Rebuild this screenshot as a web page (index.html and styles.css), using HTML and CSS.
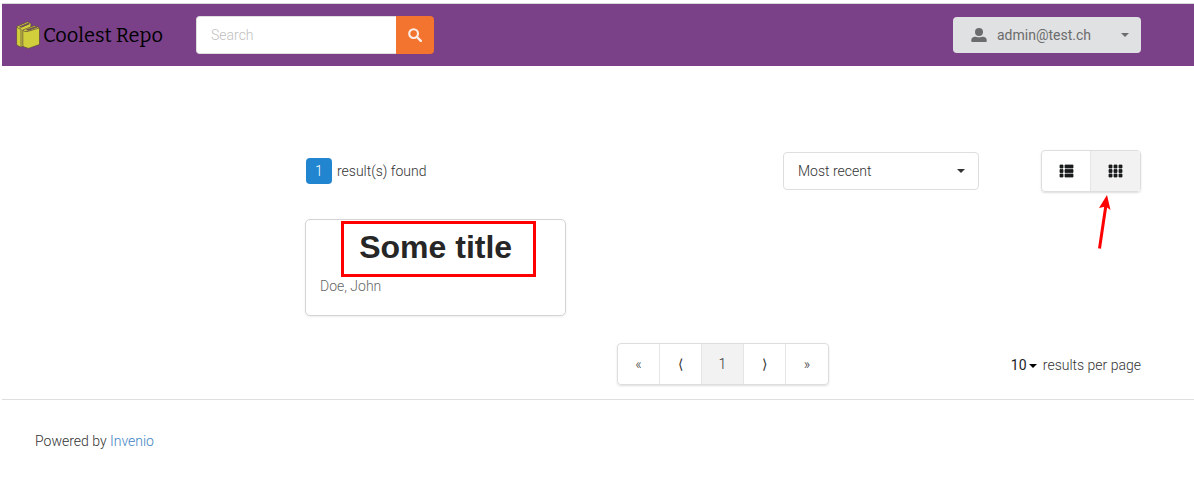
FILE: index.html
```html
<!DOCTYPE html>
<html lang="en">
<head>
<meta charset="utf-8">
<title>Coolest Repo</title>
<link rel="stylesheet" href="styles.css">
</head>
<body>
<header class="topbar">
  <a class="brand" href="#">
    <svg class="brand-icon" viewBox="0 0 24 28" aria-hidden="true">
      <g stroke="#5a4540" stroke-width=".7" stroke-linejoin="round">
        <path d="M.6 5.500 11.500.8 15 2.500 14 24 4.500 26 1.500 24.500Q.6 24 .6 22.500z" fill="#d2cf3c"/>
        <path d="M3.500 5.800 12 2.300l1.300.6L5.500 6.300z" fill="#81508b"/>
        <path d="M.8 6q1 1.500 4.200 2V25.500" fill="none"/>
        <path d="M6.800 9 18.500 4.500 23.500 6.800V23.500L12.500 27.400 8 26Q6.800 25.400 6.800 24z" fill="#d2cf3c"/>
        <path d="M10.500 8.800 19.500 5.700l1.300.5L12.500 9.300z" fill="#81508b"/>
        <path d="M7 9.400q1.200 1.400 4 1.200L23.200 7" fill="none"/>
      </g>
    </svg>
    <span>Coolest Repo</span>
  </a>
  <form class="search">
    <input class="search-input" type="search" placeholder="Search" aria-label="Search">
    <button class="search-button" type="button" aria-label="Submit search">
      <svg width="14" height="14" viewBox="0 0 14 14" aria-hidden="true"><circle cx="5.600" cy="5.600" r="4.400" fill="none" stroke="#fbeee8" stroke-width="2.100"/><path d="m9 9 3.800 3.800" stroke="#fbeee8" stroke-width="2.400" stroke-linecap="round"/></svg>
    </button>
  </form>
  <button class="account" type="button">
    <svg width="16" height="14" viewBox="0 0 16 14" fill="currentColor" aria-hidden="true"><circle cx="8" cy="4" r="4"/><path d="M1 14q-.700 0-.700-.800v-1.200Q.500 9.300 3.500 8.700h1.300q3.200 1.300 6.400 0h1.300q3 .600 3.200 3.300v1.200q0 .8-.7.800z"/></svg>
    <span>admin@test.ch</span>
    <svg class="account-caret" width="8" height="4" viewBox="0 0 8 4" fill="currentColor" aria-hidden="true"><path d="M0 0h8L4 4z"/></svg>
  </button>
</header>

<main class="layout">
  <section class="results">
    <div class="toolbar">
      <p class="count"><span class="count-label">1</span> result(s) found</p>
      <div class="picker">
        <select class="sort" aria-label="Sort by"><option>Most recent</option></select>
        <svg class="picker-caret" width="8" height="4" viewBox="0 0 8 4" aria-hidden="true"><path d="M0 0h8L4 4z" fill="#333"/></svg>
      </div>
      <div class="group views">
        <button class="cell" type="button" aria-label="List view">
          <svg width="15" height="14" viewBox="0 0 15 14" aria-hidden="true"><path d="M1 1h3v3H1zM6 1h8v3H6zM1 5.500h3v3H1zM6 5.500h8v3H6zM1 10h3v3H1zM6 10h8v3H6z" fill="#1b1c1d" stroke="#1b1c1d" stroke-width=".8" stroke-linejoin="round"/></svg>
        </button>
        <button class="cell active" type="button" aria-label="Grid view" aria-pressed="true">
          <svg width="15" height="14" viewBox="0 0 15 14" aria-hidden="true"><path d="M1 1h3v3H1zM6 1h3v3H6zM11 1h3v3h-3zM1 5.500h3v3H1zM6 5.500h3v3H6zM11 5.500h3v3h-3zM1 10h3v3H1zM6 10h3v3H6zM11 10h3v3h-3z" fill="#1b1c1d" stroke="#1b1c1d" stroke-width=".8" stroke-linejoin="round"/></svg>
        </button>
        <svg class="pointer" width="14" height="56" viewBox="0 0 14 56" aria-hidden="true"><path d="M2.500 54.500 8.800 12" stroke="red" stroke-width="3"/><path d="M10 1 13.500 16 8.800 12.500 2 14z" fill="red"/></svg>
      </div>
    </div>

    <div class="cards">
      <article class="card">
        <h1 class="card-title">Some title</h1>
        <p class="card-meta">Doe, John</p>
      </article>
    </div>

    <div class="paging">
      <nav class="group pages" aria-label="Pages">
        <button class="cell" type="button" aria-label="First page">«</button>
        <button class="cell" type="button" aria-label="Previous page">⟨</button>
        <button class="cell active" type="button" aria-current="page">1</button>
        <button class="cell" type="button" aria-label="Next page">⟩</button>
        <button class="cell" type="button" aria-label="Last page">»</button>
      </nav>
      <label class="per-page">
        <select class="size"><option>10</option></select>
        <svg class="size-caret" width="8" height="4" viewBox="0 0 8 4" aria-hidden="true"><path d="M0 0h8L4 4z"/></svg>
        <span>results per page</span>
      </label>
    </div>
  </section>
</main>

<footer class="footer">Powered by <a href="#">Invenio</a></footer>
</body>
</html>
```
FILE: styles.css
```css
*,
*::after {
  box-sizing: border-box;
}

body {
  margin: 3px 0 0 2px;
  background: #fff;
  color: #333;
  font: 300 14px/20px Roboto, "Liberation Sans", sans-serif;
}

p,
h1 {
  margin: 0;
}

button,
input,
select {
  margin: 0;
  padding: 0;
  border: 0;
  font: inherit;
  color: inherit;
  background: none;
  appearance: none;
}

svg {
  display: block;
  flex: none;
}

.topbar {
  display: flex;
  align-items: center;
  padding: 12px 53px 12px 14px;
  border-top: 1px solid #d8d9da;
  background: #7a4189;
}

.brand {
  display: flex;
  align-items: center;
  gap: 3px;
  width: 180px;
  color: #000;
  font: 400 20px/24px Bitter, "DejaVu Serif", serif;
  text-decoration: none;
  white-space: nowrap;
}

.brand-icon {
  width: 24px;
  height: 28px;
}

.search {
  display: flex;
}

.search-input {
  width: 200px;
  height: 38px;
  padding: 0 14px;
  border: 1px solid #dededf;
  border-right: 0;
  border-radius: 4px 0 0 4px;
  background: #fff;
}

.search-input::placeholder {
  color: #bfbfbf;
}

.search-button {
  display: grid;
  place-items: center;
  width: 38px;
  border-radius: 0 4px 4px 0;
  background: #f2742f;
}

.account {
  display: flex;
  align-items: center;
  gap: 10px;
  width: 188px;
  height: 36px;
  margin-left: auto;
  padding: 0 12px 0 18px;
  border-radius: 4px;
  background: #e0e1e2;
  color: #6b6c6d;
  font-weight: 400;
}

.account-caret {
  margin-left: auto;
}

.layout {
  display: grid;
  grid-template-columns: 271fr 836fr;
  padding: 84px 53px 14px 32px;
}

.results {
  grid-column: 2;
}

.toolbar {
  display: grid;
  grid-template-columns: 1fr auto auto;
  align-items: center;
  gap: 62px;
}

.count {
  display: flex;
  align-items: center;
  gap: 5px;
}

.count-label {
  width: 26px;
  margin-left: 1px;
  border-radius: 4px;
  background: #2185d0;
  color: #fff;
  line-height: 26px;
  text-align: center;
}

.picker {
  position: relative;
}

.sort {
  width: 196px;
  height: 38px;
  padding: 0 14px;
  border: 1px solid #dededf;
  border-radius: 4px;
}

.picker-caret {
  position: absolute;
  top: 17px;
  right: 14px;
}

.group {
  display: flex;
  border: 1px solid #dededf;
  border-radius: 4px;
  box-shadow: 0 1px 2px #22242626;
}

.cell {
  display: grid;
  place-items: center;
  width: 42px;
  height: 40px;
  border-right: 1px solid #e5e5e6;
}

.cell:last-of-type {
  border-right: 0;
}

.active {
  background: #f2f2f2;
}

.views {
  position: relative;
}

.views .cell {
  width: 49px;
}

.pointer {
  position: absolute;
  top: 43px;
  right: 29px;
}

.cards {
  display: grid;
  grid-template-columns: repeat(3, 1fr);
  gap: 26px;
  margin-top: 27px;
}

.card {
  position: relative;
  padding: 4px 14px 19px;
  border: 1px solid #d4d4d5;
  border-radius: 5px;
  box-shadow: 0 1px 2px #d4d4d566;
}

.card::after {
  position: absolute;
  top: 1px;
  left: 35px;
  width: 195px;
  height: 56px;
  border: 3px solid red;
  content: "";
}

.card-title {
  padding-bottom: 6px;
  color: #262626;
  font: 700 32px/46px "Liberation Sans", sans-serif;
  text-align: center;
}

.card-meta {
  color: #666;
}

.paging {
  display: grid;
  grid-template-columns: 1fr auto 1fr;
  align-items: center;
  margin-top: 27px;
}

.pages {
  grid-column: 2;
}

.per-page {
  display: flex;
  align-items: center;
  justify-self: end;
  padding-top: 2px;
}

.size {
  color: #1b1c1d;
  font-weight: 400;
}

.size-caret {
  margin: 2px 6px 0 2px;
}

.footer {
  padding: 31px 33px;
  border-top: 1px solid #dededf;
}

.footer a {
  color: #4183c4;
  text-decoration: none;
}
```
